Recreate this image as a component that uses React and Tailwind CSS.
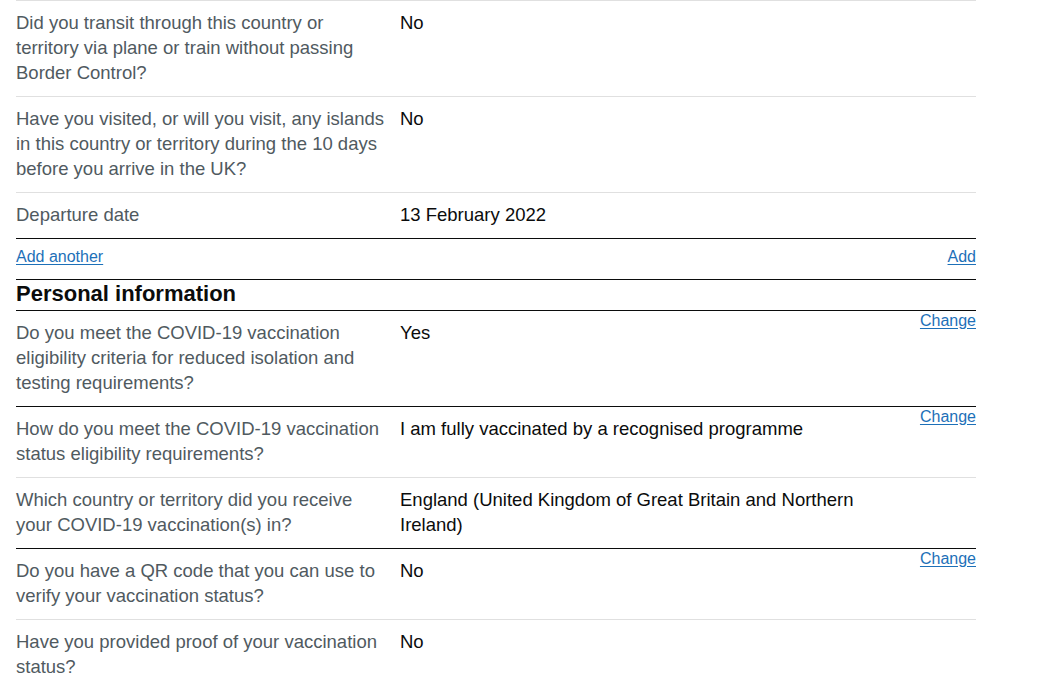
import React from 'react';

const LIGHT = 'border-[#e0e0e0]';
const DARK = 'border-[#0b0c0c]';

function Row({ label, value, action, dark }) {
  return (
    <div className={`grid grid-cols-[384px_480px_96px] border-b ${dark ? DARK : LIGHT}`}>
      <div className="pt-[9px] pb-[11px] pr-3 text-[18.5px] leading-[25px] text-[#505a5f]">{label}</div>
      <div className="pt-[9px] pb-[11px] pr-2 text-[18.5px] leading-[25px] text-[#0b0c0c]">{value}</div>
      <div className="text-right text-[16px] leading-5">
        {action && (
          <a href="#" className="text-[#1d70b8] underline underline-offset-2">
            {action}
          </a>
        )}
      </div>
    </div>
  );
}

export default function App() {
  return (
    <div className="min-h-screen bg-white pl-4 font-['Liberation_Sans',Arial,sans-serif]">
      <div className={`w-[960px] border-t ${LIGHT}`}>
        <Row
          label="Did you transit through this country or territory via plane or train without passing Border Control?"
          value="No"
        />
        <Row
          label="Have you visited, or will you visit, any islands in this country or territory during the 10 days before you arrive in the UK?"
          value="No"
        />
        <Row label="Departure date" value="13 February 2022" dark />

        {/* add another */}
        <div className={`flex justify-between border-b ${DARK} pt-2 pb-3 text-[16px] leading-5`}>
          <a href="#" className="text-[#1d70b8] underline underline-offset-2">
            Add another
          </a>
          <a href="#" className="text-[#1d70b8] underline underline-offset-2">
            Add
          </a>
        </div>

        <h2 className={`border-b ${DARK} pb-[2px] text-[22px] font-bold leading-[28px] text-[#0b0c0c]`}>
          Personal information
        </h2>

        <Row
          label="Do you meet the COVID-19 vaccination eligibility criteria for reduced isolation and testing requirements?"
          value="Yes"
          action="Change"
          dark
        />
        <Row
          label="How do you meet the COVID-19 vaccination status eligibility requirements?"
          value="I am fully vaccinated by a recognised programme"
          action="Change"
        />
        <Row
          label="Which country or territory did you receive your COVID-19 vaccination(s) in?"
          value="England (United Kingdom of Great Britain and Northern Ireland)"
          dark
        />
        <Row
          label="Do you have a QR code that you can use to verify your vaccination status?"
          value="No"
          action="Change"
        />
        <Row label="Have you provided proof of your vaccination status?" value="No" />
      </div>
    </div>
  );
}
